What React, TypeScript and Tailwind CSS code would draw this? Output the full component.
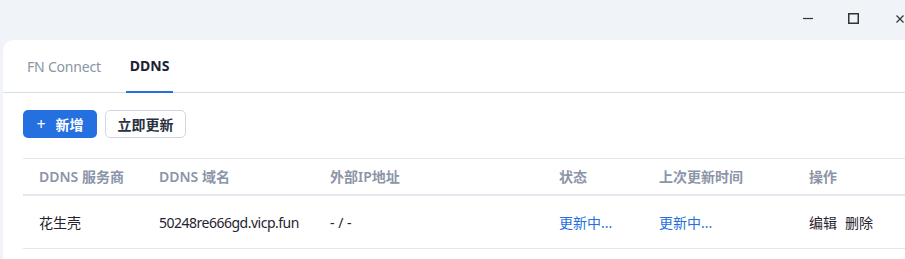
import React from "react";

const cols = [
  { label: "DDNS 服务商", w: "w-[120px]" },
  { label: "DDNS 域名", w: "w-[171px]" },
  { label: "外部IP地址", w: "w-[229px]" },
  { label: "状态", w: "w-[100px]" },
  { label: "上次更新时间", w: "w-[150px]" },
  { label: "操作", w: "flex-1" },
];

export default function App() {
  return (
    <div
      className="w-[905px] h-[259px] bg-[#f0f3f8] overflow-hidden flex flex-col"
      style={{ fontFamily: '"Noto Sans", "Noto Sans CJK SC", sans-serif' }}
    >
      {/* title bar */}
      <div className="h-[40px] flex items-start justify-end">
        <div className="flex items-center h-[37px] pr-[1px]">
          <svg width="10" height="11" viewBox="0 0 10 11" className="mr-[35px]">
            <line x1="0" y1="5.5" x2="10" y2="5.5" stroke="#333" strokeWidth="1.2" />
          </svg>
          <svg width="11" height="11" viewBox="0 0 11 11" className="mr-[37px]">
            <rect x="0.75" y="0.75" width="9.5" height="9.5" fill="none" stroke="#333" strokeWidth="1.5" />
          </svg>
          <svg width="8" height="8" viewBox="0 0 8 8">
            <path d="M0.5 0.5 L7.5 7.5 M7.5 0.5 L0.5 7.5" stroke="#333" strokeWidth="1.2" />
          </svg>
        </div>
      </div>
      {/* card */}
      <div className="flex-1 ml-[3px] bg-white rounded-tl-[10px] flex flex-col">
        <div className="h-[53px] border-b border-[#d5dde8] flex items-end pl-[24px]">
          <div className="h-full flex items-center text-[14px] text-[#8a94a6] mr-[25px] tracking-[-0.2px]">
            FN Connect
          </div>
          <div className="h-full flex flex-col items-center">
            <div className="flex-1 flex items-center px-[4px] text-[14px] font-bold text-[#1b2233]">
              DDNS
            </div>
            <div className="w-full h-[2px] bg-[#2570e0] mb-[-1px]" />
          </div>
        </div>
        <div className="pl-[20px] pt-[17px] flex gap-[8px]">
          <button className="w-[74px] h-[28px] rounded-[5px] bg-[#2570e0] text-white text-[14px] font-bold flex items-center justify-center gap-[10px]">
            <span className="text-[16px] font-normal leading-none">+</span>
            <span>新增</span>
          </button>
          <button className="w-[81px] h-[28px] rounded-[5px] border border-[#cfd7e3] bg-white text-[#2a3040] text-[14px] font-bold flex items-center justify-center">
            立即更新
          </button>
        </div>
        <div className="ml-[20px] mt-[20px] border-t border-[#e3e8ef]">
          <div className="flex h-[37px] border-b-2 border-[#e3e8ef] items-center">
            {cols.map((c) => (
              <div
                key={c.label}
                className={`${c.w} px-[16px] text-[14px] font-semibold text-[#8b95a7] whitespace-nowrap`}
              >
                {c.label}
              </div>
            ))}
          </div>
          <div className="flex h-[53px] border-b border-[#e3e8ef] items-center text-[14px]">
            <div className="w-[120px] px-[16px] text-[#1f2430]">花生壳</div>
            <div className="w-[171px] px-[16px] text-[#1f2430] whitespace-nowrap tracking-[-0.5px]">
              50248re666gd.vicp.fun
            </div>
            <div className="w-[229px] px-[16px] text-[#1f2430]">- / -</div>
            <div className="w-[100px] px-[16px] text-[#2570e0]">更新中...</div>
            <div className="w-[150px] px-[16px] text-[#2570e0]">更新中...</div>
            <div className="flex-1 px-[16px] text-[#1f2430] flex gap-[8px]">
              <span>编辑</span>
              <span>删除</span>
            </div>
          </div>
        </div>
      </div>
    </div>
  );
}
